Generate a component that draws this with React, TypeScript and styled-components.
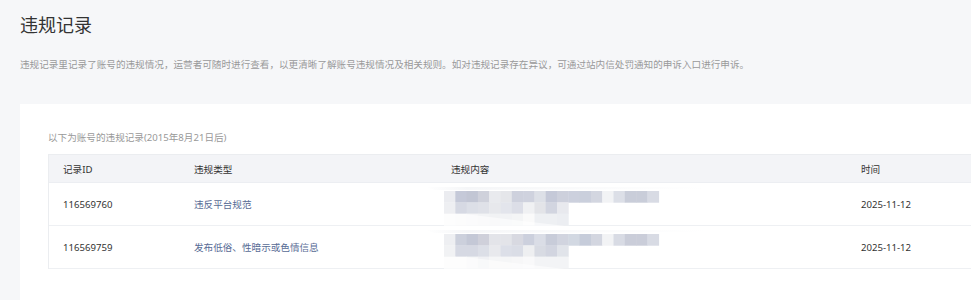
import React from "react";
import styled, { createGlobalStyle } from "styled-components";

const GlobalStyle = createGlobalStyle`
  html, body {
    margin: 0;
    padding: 0;
    background: #f6f7f9;
    overflow: hidden;
  }
  body {
    font-family: "Noto Sans", "Noto Sans CJK SC", sans-serif;
    -webkit-font-smoothing: antialiased;
  }
`;

const Page = styled.div`
  width: 100%;
  height: 300px;
  display: flex;
  flex-direction: column;
  overflow: hidden;
`;

const Header = styled.header`
  padding: 14px 20px 31px;
`;

const Title = styled.h1`
  margin: 0;
  font-size: 18px;
  line-height: 22px;
  font-weight: 400;
  color: #333;
`;

const Desc = styled.p`
  margin: 21px 0 0;
  font-size: 9.6px;
  line-height: 16px;
  color: #999;
  white-space: nowrap;
`;

const Card = styled.section`
  flex: 1;
  margin-left: 20px;
  background: #fff;
  padding: 26px 0 0 28px;
  overflow: hidden;
`;

const Caption = styled.div`
  font-size: 9.6px;
  line-height: 16px;
  color: #999;
  margin-bottom: 8px;
`;

const Table = styled.div`
  width: calc(100% + 40px);
  border-left: 1px solid #ebedf0;
  border-top: 1px solid #ebedf0;
`;

const Row = styled.div<{ $head?: boolean }>`
  display: grid;
  grid-template-columns: 131px 257px 410px 1fr;
  height: ${(p) => (p.$head ? 27 : 42)}px;
  background: ${(p) => (p.$head ? "#f3f4f7" : "#fff")};
  border-bottom: 1px solid ${(p) => (p.$head ? "#eceef2" : "#eef0f3")};
`;

const Cell = styled.div<{ $tone?: "link" | "head" }>`
  display: flex;
  align-items: center;
  padding-left: 14px;
  padding-bottom: ${(p) => (p.$tone === "head" ? 0 : 2)}px;
  font-size: 9.6px;
  color: ${(p) => (p.$tone === "link" ? "#576b95" : "#333")};
  white-space: nowrap;
`;

const MaskCell = styled.div`
  padding-left: 14px;
`;

const MaskArt = styled.svg`
  display: block;
  margin: 2px 0 0 -26px;
`;

const rowA1 = ["#ebecf0", "#c5c9d8", "#c2c6d4", "#cfd1db", "#e9eaee", "#e5e6ea", "#ced1dd", "#cfd2de", "#dde0e7", "#c5c9d8", "#cdd0dc", "#ccd0dd", "#cacfdc", "#d3d6e0", "#f2f3f5", "#dcdfe7", "#c9cdd9", "#c9cdd9", "#d8dbe4"];
const rowB1 = ["#eeeff2", "#d6d9e3", "#dcdfe7", "#dfe1e8", "#e7e8ec", "#e3e5ec", "#dcdee7", "#f0f1f3", "#e3e4e8", "#d2d5e0", "#e8e9ee"];
const rowC1 = ["#fafafb", "#f8f8f9", "#f6f6f8", "#f3f4f6", "#f1f2f4", "#f2f3f5", "#f4f5f6", "#fafafa", "#eef0f3", "#eef0f3", "#eceef2"];

const rowA2 = ["#eeeff2", "#ccd0dc", "#c4c8d6", "#cfd0da", "#e3e4e9", "#e3e4e9", "#d8d9e1", "#ccd0dd", "#dadde6", "#c8ccd9", "#d1d4df", "#d2d8e2", "#c6ccda", "#d3d6e0", "#f2f3f5", "#d8dbe4", "#cacdd9", "#cacdd9", "#d8dbe4"];
const rowB2 = ["#f1f2f4", "#d6d9e3", "#d6d9e3", "#dcdfe7", "#e8e9ed", "#dcdfe8", "#dadde6", "#eeeff1", "#d8dbe3", "#d2d5e0", "#e1e4ea"];
const rowC2 = ["#fbfbfb", "#fafafa", "#f6f7f8", "#f0f1f4", "#f5f6f7", "#f5f6f7", "#f7f7f8", "#f9f9fa", "#f3f4f6", "#f3f4f6", "#f3f4f6"];

const CELL = 11.3;

// Pixelated block that hides the violation text
function Mosaic({ rows, id }: { rows: string[][]; id: string }) {
  return (
    <MaskArt width={290} height={42} viewBox="0 0 290 42">
      <defs>
        <linearGradient id={`sheen-${id}`} x1="0" x2="1" y1="0" y2="0">
          <stop offset="0" stopColor="#f4f5f7" stopOpacity="0" />
          <stop offset="0.15" stopColor="#f4f5f7" stopOpacity="0.9" />
          <stop offset="1" stopColor="#f4f5f7" stopOpacity="0" />
        </linearGradient>
      </defs>
      <polygon points="0,2 280,2 280,4 10,5" fill={`url(#sheen-${id})`} />
      {rows.map((row, r) =>
        row.map((c, i) => (
          <rect
            key={`${r}-${i}`}
            x={19 + i * CELL}
            y={6 + r * CELL}
            width={CELL + 0.4}
            height={CELL + 0.4}
            fill={c}
          />
        ))
      )}
      <polygon points="19,29 40,29 140,41 19,41" fill="#ffffff" opacity="0.55" />
    </MaskArt>
  );
}

const records = [
  { id: "116569760", type: "违反平台规范", a: rowA1, b: rowB1, c: rowC1, date: "2025-11-12" },
  { id: "116569759", type: "发布低俗、性暗示或色情信息", a: rowA2, b: rowB2, c: rowC2, date: "2025-11-12" },
];

export default function App() {
  return (
    <Page>
      <GlobalStyle />
      <Header>
        <Title>违规记录</Title>
        <Desc>
          违规记录里记录了账号的违规情况，运营者可随时进行查看，以更清晰了解账号违规情况及相关规则。如对违规记录存在异议，可通过站内信处罚通知的申诉入口进行申诉。
        </Desc>
      </Header>
      <Card>
        <Caption>以下为账号的违规记录(2015年8月21日后)</Caption>
        <Table>
          <Row $head>
            <Cell $tone="head">记录ID</Cell>
            <Cell $tone="head">违规类型</Cell>
            <Cell $tone="head">违规内容</Cell>
            <Cell $tone="head">时间</Cell>
          </Row>
          {records.map((r) => (
            <Row key={r.id}>
              <Cell>{r.id}</Cell>
              <Cell $tone="link">{r.type}</Cell>
              <MaskCell>
                <Mosaic rows={[r.a, r.b, r.c]} id={r.id} />
              </MaskCell>
              <Cell>{r.date}</Cell>
            </Row>
          ))}
        </Table>
      </Card>
    </Page>
  );
}
